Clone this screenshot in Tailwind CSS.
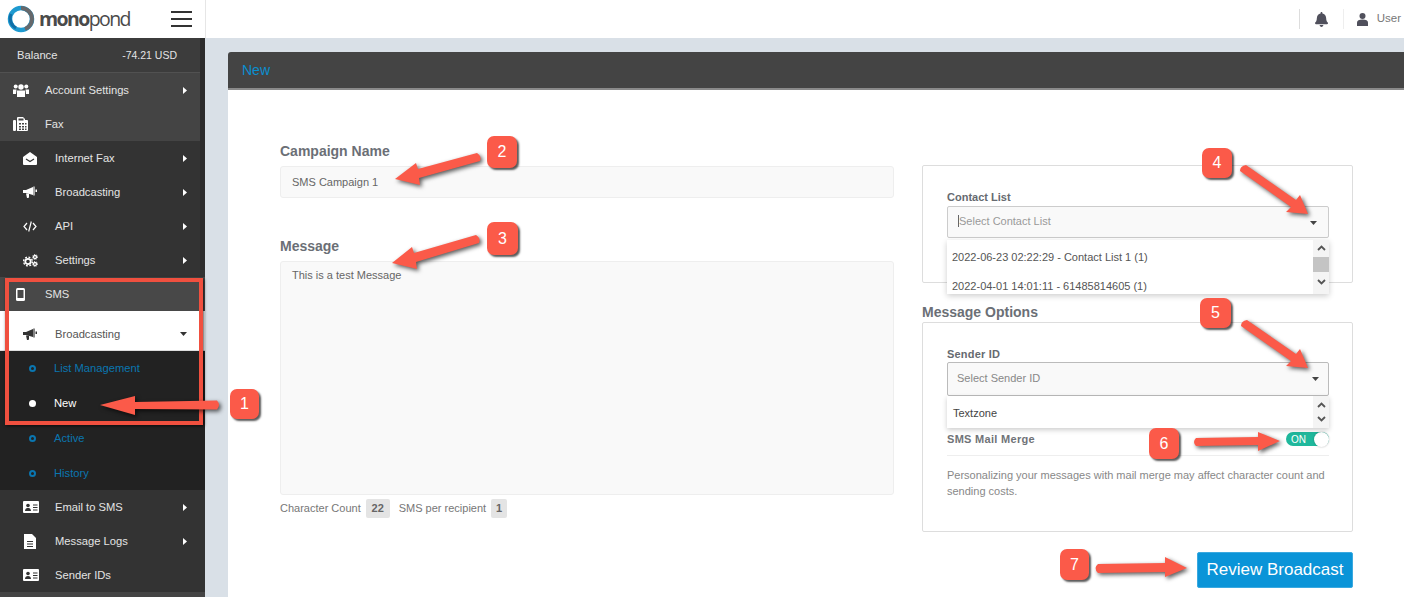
<!DOCTYPE html>
<html lang="en">
<head>
  <meta charset="UTF-8" />
  <meta name="viewport" content="width=device-width, initial-scale=1.0" />
  <title>New Broadcast - Monopond</title>
  <script src="https://cdn.jsdelivr.net/npm/@tailwindcss/browser@4"></script>
</head>
<body class="font-['Liberation_Sans',Arial,sans-serif] bg-white">
  <div class="relative w-[1404px] h-[597px] overflow-hidden flex flex-col">

    <!-- Top bar -->
    <header class="h-[38px] shrink-0 flex bg-white">
      <div class="w-[206px] shrink-0 border-r border-[#e6e6e6] flex items-center pl-[7px]">
        <svg class="w-[28px] h-[28px] shrink-0" viewBox="0 0 28 28">
          <circle cx="14" cy="14" r="11" fill="none" stroke="#1e9ad0" stroke-width="4.5"/>
          <path d="M14 3a11 11 0 0 1 11 11 11 11 0 0 1-7 10" fill="none" stroke="#66686b" stroke-width="4"/>
          <path d="M4 9a11 11 0 0 0 5 14" fill="none" stroke="#0f6fa8" stroke-width="3"/>
        </svg>
        <span class="ml-[4px] w-[92px] text-[19.5px] leading-none tracking-[-1.6px] text-[#4a4a4a] font-['Open_Sans',sans-serif]"><span class="font-bold">mono</span><span class="font-normal">pond</span></span>
        <div class="ml-[40px] flex flex-col gap-[5px] w-[21px] shrink-0">
          <div class="h-[2px] bg-[#333]"></div>
          <div class="h-[2px] bg-[#333]"></div>
          <div class="h-[2px] bg-[#333]"></div>
        </div>
      </div>
      <div class="flex-1 flex items-center justify-end pr-[3px]">
        <div class="w-px h-[20px] bg-[#ddd]"></div>
        <svg class="w-[13px] h-[15px] ml-[15px] fill-[#50505c]" viewBox="0 0 448 512"><path d="M224 512c35.32 0 63.97-28.65 63.97-64H160.03c0 35.35 28.65 64 63.97 64zm215.39-149.71c-19.32-20.76-55.47-51.99-55.47-154.29 0-77.7-54.48-139.9-127.94-155.16V32c0-17.67-14.32-32-31.98-32s-31.98 14.33-31.98 32v20.84C118.56 68.1 64.08 130.3 64.08 208c0 102.3-36.15 133.53-55.47 154.29-6 6.45-8.66 14.16-8.61 21.71.11 16.4 12.98 32 32.1 32h383.8c19.12 0 32-15.6 32.1-32 .05-7.55-2.61-15.27-8.61-21.71z"/></svg>
        <div class="w-px h-[20px] bg-[#eee] ml-[15px]"></div>
        <svg class="w-[11px] h-[13px] ml-[13px] fill-[#50505c]" viewBox="0 0 11 13"><circle cx="5.5" cy="3" r="3"/><path d="M0 13V9.500C0 7.500 2 6.500 5.500 6.500S11 7.500 11 9.500V13z"/></svg>
        <span class="ml-[9px] text-[11.5px] text-[#777]">User</span>
      </div>
    </header>

    <div class="flex flex-1 min-h-0">
      <!-- Sidebar -->
      <aside class="relative w-[205px] shrink-0 bg-[#444] text-[11.2px] text-[#e4e4e4]">
        <div class="absolute top-0 right-0 w-[5px] h-[232px] bg-[#2c2c2c]"></div>
        <div class="h-[35px] pt-px bg-[#3c3c3c] border-b border-[#515151] flex items-center pl-[17px] pr-[28px] justify-between">
          <span>Balance</span><span class="text-[10.5px]">-74.21 USD</span>
        </div>

        <div class="h-[34px] flex items-center pl-[13px] pr-[18px]">
          <svg class="w-[16px] h-[13px] fill-white" viewBox="0 0 16 13"><circle cx="2.700" cy="2.500" r="2"/><circle cx="13.300" cy="2.500" r="2"/><circle cx="8" cy="3" r="2.700"/><path d="M0 5.500h3.500L3 10H0zM16 5.500h-3.500L13 10h3zM4 6.500h8V13H4z"/></svg>
          <span class="ml-[16px] flex-1">Account Settings</span>
          <svg class="w-[4px] h-[7px] fill-white" viewBox="0 0 4 7"><path d="M0 0l4 3.500L0 7z"/></svg>
        </div>
        <div class="h-[34px] flex items-center pl-[13px] pr-[18px]">
          <svg class="w-[15px] h-[14px] fill-white" viewBox="0 0 15 14"><rect x="0" y="3" width="3" height="11" rx="1"/><path d="M4 3V1a1 1 0 0 1 1-1h5l2 2v1h2a1 1 0 0 1 1 1v9a1 1 0 0 1-1 1H4z"/><path fill="#444" d="M5.500 1.500h5v2h-5zM6 6h2v1.500H6zM9 6h2v1.500H9zM12 6h1.500v1.500H12zM6 9h2v1.500H6zM9 9h2v1.500H9zM12 9h1.500v1.500H12zM6 11.500h2V13H6zM9 11.500h2V13H9zM12 11.500h1.500V13H12z"/></svg>
          <span class="ml-[17px] flex-1">Fax</span>
        </div>

        <div class="bg-[#333]">
          <div class="h-[34px] flex items-center pl-[23px] pr-[18px]">
            <svg class="w-[14px] h-[13px] fill-white" viewBox="0 0 14 13"><path d="M0 5l7-5 7 5v7a1 1 0 0 1-1 1H1a1 1 0 0 1-1-1z"/><path d="M3 7l4 2.500L11 7" fill="none" stroke="#333" stroke-width="1.200"/></svg>
            <span class="ml-[18px] flex-1">Internet Fax</span>
            <svg class="w-[4px] h-[7px] fill-white" viewBox="0 0 4 7"><path d="M0 0l4 3.500L0 7z"/></svg>
          </div>
          <div class="h-[34px] flex items-center pl-[23px] pr-[18px]">
            <svg class="w-[14px] h-[12px] fill-white" viewBox="0 0 14 12"><path d="M0 4h3l7-3v8L3 7H0z"/><path d="M3 7.500h3V11a1 1 0 0 1-1 1H4z"/><path d="M11 0.500v9" stroke="#fff" stroke-width="1.200"/><path d="M12.500 3.500h1.500v2.500h-1.500z"/></svg>
            <span class="ml-[18px] flex-1">Broadcasting</span>
            <svg class="w-[4px] h-[7px] fill-white" viewBox="0 0 4 7"><path d="M0 0l4 3.500L0 7z"/></svg>
          </div>
          <div class="h-[34px] flex items-center pl-[23px] pr-[18px]">
            <svg class="w-[14px] h-[11px]" viewBox="0 0 14 11" fill="none" stroke="#fff" stroke-width="1.200"><path d="M4 2L1 5.500 4 9M10 2l3 3.500L10 9M8.300 0.500L5.700 10.500"/></svg>
            <span class="ml-[18px] flex-1">API</span>
            <svg class="w-[4px] h-[7px] fill-white" viewBox="0 0 4 7"><path d="M0 0l4 3.500L0 7z"/></svg>
          </div>
          <div class="h-[34px] flex items-center pl-[23px] pr-[18px]">
            <svg class="w-[15px] h-[13px]" viewBox="0 0 15 13" fill="none" stroke="#fff">
              <circle cx="5" cy="7.500" r="2.700" stroke-width="1.800"/>
              <circle cx="5" cy="7.500" r="4.400" stroke-width="1.400" stroke-dasharray="1.900 1.550"/>
              <circle cx="12" cy="3" r="1.500" stroke-width="1.300"/>
              <circle cx="12" cy="10" r="1.500" stroke-width="1.300"/>
              <circle cx="12" cy="3" r="2.500" stroke-width="0.900" stroke-dasharray="1 1.100"/>
              <circle cx="12" cy="10" r="2.500" stroke-width="0.900" stroke-dasharray="1 1.100"/>
            </svg>
            <span class="ml-[17px] flex-1">Settings</span>
            <svg class="w-[4px] h-[7px] fill-white" viewBox="0 0 4 7"><path d="M0 0l4 3.500L0 7z"/></svg>
          </div>
        </div>

        <div class="h-[34px] bg-[#484848] flex items-center pl-[16px] pr-[18px]">
          <svg class="w-[9px] h-[13px]" viewBox="0 0 9 13"><rect width="9" height="13" rx="1.500" fill="#fff"/><rect x="1.500" y="2" width="6" height="8" fill="#484848"/></svg>
          <span class="ml-[20px] flex-1">SMS</span>
        </div>
        <div class="h-[40px] pt-[7px] bg-white text-[#555] flex items-center pl-[23px] pr-[18px] border-b border-[#ddd]">
          <svg class="w-[14px] h-[12px] fill-[#333]" viewBox="0 0 14 12"><path d="M0 4h3l7-3v8L3 7H0z"/><path d="M3 7.500h3V11a1 1 0 0 1-1 1H4z"/><path d="M11 0.500v9" stroke="#333" stroke-width="1.200"/><path d="M12.500 3.500h1.500v2.500h-1.500z"/></svg>
          <span class="ml-[18px] flex-1">Broadcasting</span>
          <svg class="w-[7px] h-[4px] fill-[#333]" viewBox="0 0 7 4"><path d="M0 0h7L3.500 4z"/></svg>
        </div>
        <div class="bg-[#222] h-[139px] flex flex-col text-[#0a76b0]">
          <div class="h-[35px] flex items-center pl-[29px]">
            <span class="w-[7px] h-[7px] rounded-full border-2 border-[#0a76b0]"></span><span class="ml-[18px]">List Management</span>
          </div>
          <div class="h-[35px] flex items-center pl-[29px] text-white">
            <span class="w-[7px] h-[7px] rounded-full bg-white"></span><span class="ml-[18px]">New</span>
          </div>
          <div class="h-[35px] flex items-center pl-[29px]">
            <span class="w-[7px] h-[7px] rounded-full border-2 border-[#0a76b0]"></span><span class="ml-[18px]">Active</span>
          </div>
          <div class="h-[34px] pt-px flex items-center pl-[29px]">
            <span class="w-[7px] h-[7px] rounded-full border-2 border-[#0a76b0]"></span><span class="ml-[18px]">History</span>
          </div>
        </div>

        <div class="bg-[#333]">
          <div class="h-[34px] flex items-center pl-[23px] pr-[18px]">
            <svg class="w-[16px] h-[12px]" viewBox="0 0 16 12"><rect width="16" height="12" rx="1" fill="#fff"/><circle cx="5" cy="4.500" r="1.800" fill="#333"/><path d="M2 10c0-2 1.200-3 3-3s3 1 3 3zM10 3.500h4.500v1H10zM10 6h4.500v1H10zM10 8.500h4.500v1H10z" fill="#333"/></svg>
            <span class="ml-[16px] flex-1">Email to SMS</span>
            <svg class="w-[4px] h-[7px] fill-white" viewBox="0 0 4 7"><path d="M0 0l4 3.500L0 7z"/></svg>
          </div>
          <div class="h-[34px] flex items-center pl-[24px] pr-[18px]">
            <svg class="w-[12px] h-[15px]" viewBox="0 0 12 15"><path d="M0 0h8l4 4v11H0z" fill="#fff"/><path d="M3 7h6v1H3zM3 9.500h6v1H3zM3 12h6v1H3z" fill="#333"/></svg>
            <span class="ml-[19px] flex-1">Message Logs</span>
            <svg class="w-[4px] h-[7px] fill-white" viewBox="0 0 4 7"><path d="M0 0l4 3.500L0 7z"/></svg>
          </div>
          <div class="h-[34px] flex items-center pl-[23px] pr-[18px]">
            <svg class="w-[16px] h-[12px]" viewBox="0 0 16 12"><rect width="16" height="12" rx="1" fill="#fff"/><circle cx="5" cy="4.500" r="1.800" fill="#333"/><path d="M2 10c0-2 1.200-3 3-3s3 1 3 3zM10 3.500h4.500v1H10zM10 6h4.500v1H10zM10 8.500h4.500v1H10z" fill="#333"/></svg>
            <span class="ml-[16px] flex-1">Sender IDs</span>
          </div>
        </div>
      </aside>

      <!-- Main -->
      <main class="flex-1 bg-[#d9e0e7] pt-[14px] pl-[23px]">
        <div class="h-[38px] bg-[#444] border-b-2 border-[#8a8a8a] rounded-tl-[3px] flex items-center pl-[14px] text-[14px] text-[#0a8fd0]">New</div>
        <div class="bg-white h-[510px] pl-[52px] pr-[51px] pt-[53px] grid grid-cols-[614px_431px] gap-x-[28px] items-start">

          <section class="text-[#6c6c6c]">
            <label class="block text-[14px] leading-[17px] font-bold text-[#6b6f76]">Campaign Name</label>
            <div class="mt-[6px] h-[32px] bg-[#f9f9f9] border border-[#eee] rounded-[3px] flex items-center pl-[11px] text-[11px] text-[#666]">SMS Campaign 1</div>
            <label class="block mt-[40px] text-[14px] leading-[17px] font-bold text-[#6b6f76]">Message</label>
            <div class="mt-[6px] h-[234px] bg-[#f9f9f9] border border-[#eee] rounded-[3px] pl-[11px] pt-[7px] text-[11px] leading-[13px] text-[#666]">This is a test Message</div>
            <div class="mt-[4px] flex items-center text-[11px] text-[#777]">
              <span>Character Count</span>
              <span class="ml-[5px] h-[19px] w-[24px] rounded-[2px] bg-[#e4e4e4] flex items-center justify-center font-bold text-[#666]">22</span>
              <span class="ml-[9px]">SMS per recipient</span>
              <span class="ml-[5px] h-[19px] w-[16px] rounded-[2px] bg-[#e4e4e4] flex items-center justify-center font-bold text-[#666]">1</span>
            </div>
          </section>

          <section class="mt-[22px]">
            <div class="h-[118px] border border-[#ddd] rounded-[2px] pl-[24px] pr-[23px] pt-[25px]">
              <label class="block text-[11px] leading-[13px] font-bold text-[#666a70]">Contact List</label>
              <div class="relative mt-[2px]">
                <div class="h-[32px] pb-[2px] bg-[#f9f9f9] border border-[#ccc] rounded-[2px] flex items-center pl-[10px] pr-[11px] text-[11px] text-[#999]">
                  <span class="w-px h-[12px] bg-[#666]"></span>
                  <span class="flex-1">Select Contact List</span>
                  <svg class="w-[7px] h-[4px] fill-[#444] mt-[3px]" viewBox="0 0 7 4"><path d="M0 0h7L3.500 4z"/></svg>
                </div>
                <div class="absolute left-0 right-0 top-[34px] h-[54px] bg-white shadow-[0_2px_6px_rgba(0,0,0,0.2)] flex text-[11px] text-[#555]">
                  <div class="flex-1 pl-[5px] pt-[11px] leading-[13px]">
                    <p>2022-06-23 02:22:29 - Contact List 1 (1)</p>
                    <p class="mt-[16px]">2022-04-01 14:01:11 - 61485814605 (1)</p>
                  </div>
                  <div class="w-[16px] bg-[#f4f4f4] flex flex-col items-center pt-[5px]">
                    <svg class="w-[9px] h-[6px]" viewBox="0 0 9 6" fill="none" stroke="#555" stroke-width="1.800"><path d="M1 5l3.500-3.500L8 5"/></svg>
                    <div class="w-full h-[15px] mt-[6px] bg-[#c4c4c4]"></div>
                    <svg class="w-[9px] h-[6px] mt-[7px]" viewBox="0 0 9 6" fill="none" stroke="#555" stroke-width="1.800"><path d="M1 1l3.500 3.500L8 1"/></svg>
                  </div>
                </div>
              </div>
            </div>

            <h3 class="mt-[21px] text-[14px] leading-[17px] font-bold text-[#6b6f76]">Message Options</h3>
            <div class="mt-px h-[210px] border border-[#ddd] rounded-[2px] pl-[24px] pr-[23px] pt-[25px]">
              <label class="block text-[11px] leading-[13px] font-bold tracking-[0.2px] text-[#666a70]">Sender ID</label>
              <div class="relative mt-px">
                <div class="h-[34px] pb-[2px] bg-[#f9f9f9] border border-[#bbb] rounded-[2px] flex items-center pl-[9px] pr-[9px] text-[11px] text-[#888]">
                  <span class="flex-1">Select Sender ID</span>
                  <svg class="w-[7px] h-[4px] fill-[#444] mt-[2px]" viewBox="0 0 7 4"><path d="M0 0h7L3.500 4z"/></svg>
                </div>
                <div class="absolute left-0 right-0 top-[34px] h-[32px] bg-white shadow-[0_2px_5px_rgba(0,0,0,0.2)] flex items-center text-[11px] text-[#444]">
                  <span class="flex-1 pl-[6px] pt-[3px]">Textzone</span>
                  <div class="w-[16px] h-full bg-[#f4f4f4] flex flex-col items-center justify-between py-[6px]">
                    <svg class="w-[9px] h-[6px]" viewBox="0 0 9 6" fill="none" stroke="#555" stroke-width="1.800"><path d="M1 5l3.500-3.500L8 5"/></svg>
                    <svg class="w-[9px] h-[6px]" viewBox="0 0 9 6" fill="none" stroke="#555" stroke-width="1.800"><path d="M1 1l3.500 3.500L8 1"/></svg>
                  </div>
                </div>
              </div>
              <div class="mt-[36px] flex items-center justify-between h-[14px]">
                <span class="text-[11px] font-bold tracking-[0.3px] text-[#707378]">SMS Mail Merge</span>
                <div class="w-[43px] h-[14px] rounded-full bg-[#1fb89c] flex items-center justify-between pl-[5px] text-[10px] text-white">
                  <span>ON</span>
                  <span class="w-[15px] h-[15px] rounded-full bg-white shadow-[0_0_2px_rgba(0,0,0,0.3)]"></span>
                </div>
              </div>
              <div class="mt-[9px] border-t border-[#eee]"></div>
              <p class="mt-[11px] text-[11px] leading-[16px] text-[#888]">Personalizing your messages with mail merge may affect character count and sending costs.</p>
            </div>
            <div class="mt-[20px] flex justify-end">
              <button class="w-[156px] h-[36px] bg-[#0a94d8] border border-[#3aa9e0] rounded-[2px] text-[17px] text-white">Review Broadcast</button>
            </div>
          </section>
        </div>
      </main>
    </div>

    <!-- Annotations laid over the screenshot -->
    <div class="absolute left-[5px] top-[278px] w-[198px] h-[147px] border-4 border-[#f0503f] shadow-[1px_1px_3px_rgba(0,0,0,0.7)] pointer-events-none"></div>

    <svg class="absolute inset-0 pointer-events-none" width="1404" height="597" viewBox="0 0 1404 597" fill="#fb5a49">
      <g style="filter:drop-shadow(2px 2px 2px rgba(0,0,0,0.65))">
        <path d="M217 400.500L135 402V396L100 405L135 415V409L217 409.500Q221 405 217 400.500Z"/>
        <path d="M477 153L418 169L416 163L395 179L420 185L419 178L480 161Q482 156 477 153Z"/>
        <path d="M476 235L414 253L412 247L392 263L417 269L416 262L479 243Q481 238 476 235Z"/>
        <path d="M1240 171L1291 207L1286 212L1308 214L1300 195L1296 200L1246 165Q1240 166 1240 171Z"/>
        <path d="M1241 326L1291 361L1286 366L1308 368L1300 349L1296 354L1247 320Q1241 321 1241 326Z"/>
        <path d="M1196 438L1258 437V432L1280 441L1258 451V445L1196 446Q1192 442 1196 438Z"/>
        <path d="M1098 564L1165 563V557L1187 568L1165 577V572L1098 573Q1093 568 1098 564Z"/>
      </g>
    </svg>

    <div class="absolute left-[230px] top-[389px] w-[29px] h-[30px] rounded-[7px] bg-[#fb5a49] shadow-[2px_2px_2px_rgba(0,0,0,0.65)] flex items-center justify-center text-[16px] text-white">1</div>
    <div class="absolute left-[487px] top-[136px] w-[30px] h-[32px] rounded-[7px] bg-[#fb5a49] shadow-[2px_2px_2px_rgba(0,0,0,0.65)] flex items-center justify-center text-[16px] text-white">2</div>
    <div class="absolute left-[487px] top-[222px] w-[31px] h-[33px] rounded-[7px] bg-[#fb5a49] shadow-[2px_2px_2px_rgba(0,0,0,0.65)] flex items-center justify-center text-[16px] text-white">3</div>
    <div class="absolute left-[1202px] top-[148px] w-[30px] h-[30px] rounded-[7px] bg-[#fb5a49] shadow-[2px_2px_2px_rgba(0,0,0,0.65)] flex items-center justify-center text-[16px] text-white">4</div>
    <div class="absolute left-[1200px] top-[298px] w-[31px] h-[30px] rounded-[7px] bg-[#fb5a49] shadow-[2px_2px_2px_rgba(0,0,0,0.65)] flex items-center justify-center text-[16px] text-white">5</div>
    <div class="absolute left-[1149px] top-[428px] w-[30px] h-[31px] rounded-[7px] bg-[#fb5a49] shadow-[2px_2px_2px_rgba(0,0,0,0.65)] flex items-center justify-center text-[16px] text-white">6</div>
    <div class="absolute left-[1060px] top-[549px] w-[29px] h-[31px] rounded-[7px] bg-[#fb5a49] shadow-[2px_2px_2px_rgba(0,0,0,0.65)] flex items-center justify-center text-[16px] text-white">7</div>
  </div>
</body>
</html>
